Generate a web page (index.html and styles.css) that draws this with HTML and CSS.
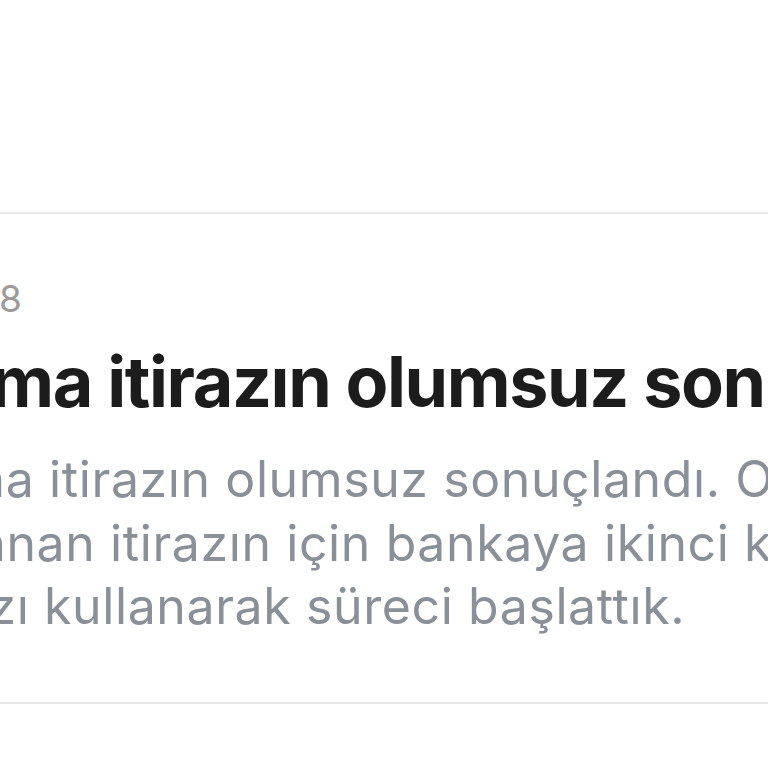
FILE: index.html
```html
<!DOCTYPE html>
<html lang="tr">
<head>
  <meta charset="UTF-8">
  <meta name="viewport" content="width=device-width, initial-scale=1.0">
  <title>Bildirimler</title>
  <link rel="stylesheet" href="styles.css">
</head>
<body>

<div class="notification-list">
  <div class="notification">
    <div class="notification-content">
      <div class="notification-date">21.02.2018</div>
      <h2 class="notification-title">Harcama itirazın olumsuz sonuçlandı</h2>
      <p class="notification-text">Harcama itirazın olumsuz sonuçlandı. Olumsuz sonuçlanan itirazın için bankaya ikinci kez itiraz hakkınızı kullanarak süreci başlattık.</p>
    </div>
  </div>
</div>

</body>
</html>
```

FILE: styles.css
```css
body {
  margin: 0;
  background-color: #ffffff;
  font-family: Inter, "Noto Sans", sans-serif;
  overflow: hidden;
}
.notification-list {
  padding-top: 212px;
  overflow: hidden;
}
.notification {
  border-top: 2px solid #ebebeb;
  border-bottom: 2px solid #e6e6e6;
  padding: 63px 0 63px 0;
}
.notification-content {
  margin-left: -182px;
  width: 1180px;
}
.notification-date {
  font-size: 37px;
  line-height: 44px;
  letter-spacing: 1.8px;
  color: #9b9b9b;
}
.notification-title {
  margin: 19px 0 0 -23px;
  font-size: 70px;
  line-height: 84px;
  font-weight: 700;
  letter-spacing: -1.4px;
  color: #1c1c1c;
  white-space: nowrap;
}
.notification-text {
  margin: 24px 0 0 0;
  font-size: 50px;
  line-height: 63.5px;
  letter-spacing: 0.6px;
  color: #8a9098;
}
```
